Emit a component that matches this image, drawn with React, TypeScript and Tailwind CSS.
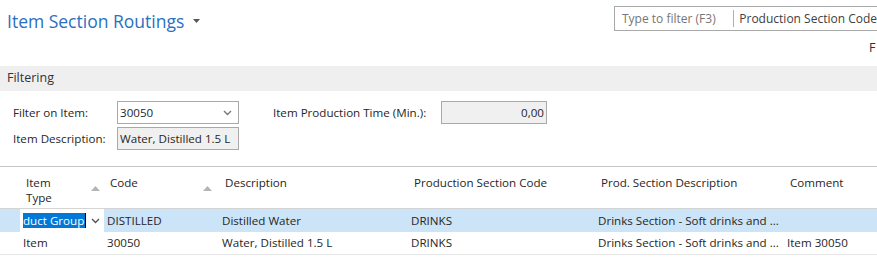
import React from 'react';

const font = { fontFamily: '"Open Sans", "Noto Sans", sans-serif' };

const Chevron = ({ className = '' }: { className?: string }) => (
  <svg width="9" height="6" viewBox="0 0 9 6" className={className}>
    <path d="M1 1 L4.5 4.5 L8 1" fill="none" stroke="currentColor" strokeWidth="1.4" />
  </svg>
);

const SortUp = () => (
  <svg width="9" height="5" viewBox="0 0 9 5">
    <path d="M0 5 L4.5 0 L9 5 Z" fill="#b4b4b4" />
  </svg>
);

const cols = 'grid grid-cols-[20px_84px_115px_189px_187px_189px_1fr]';

const App: React.FC = () => {
  return (
    <div className="w-[877px] h-[261px] bg-white overflow-hidden text-[11.6px] text-[#262626]" style={font}>
      {/* top bar */}
      <div className="flex h-[66px]">
        <div className="flex items-start pl-[7px] pt-[6px]">
          <span className="text-[17.5px] text-[#2a6fc2] leading-[30px]">Item Section Routings</span>
          <svg width="7" height="4" viewBox="0 0 7 4" className="ml-[9px] mt-[13px]">
            <path d="M0 0 L7 0 L3.5 4 Z" fill="#555" />
          </svg>
        </div>
        <div className="ml-auto flex flex-col items-end pt-[6px]">
          <div className="flex w-[263px] h-[25px] border border-[#a9a9a9] border-r-0 items-center text-[12px]">
            <span className="pl-[7px] w-[122px] text-[#767676]">Type to filter (F3)</span>
            <span className="h-[17px] w-px bg-[#b0b0b0]" />
            <span className="pl-[5px] whitespace-nowrap text-[#404040]">Production Section Code</span>
          </div>
          <span className="mt-[9px] w-[8px] text-[12.5px] text-[#333] overflow-hidden leading-[16px]">F</span>
        </div>
      </div>

      {/* Filtering fasttab */}
      <div className="h-[25px] bg-[#efefef] flex items-center pl-[7px] text-[12.5px] text-[#333]">Filtering</div>

      <div className="flex pt-[10px] pl-[13px] gap-[34px]">
        <div className="flex flex-col gap-[3px]">
          <div className="flex items-center h-[23px]">
            <span className="w-[104px]">Filter on Item:</span>
            <div className="w-[122px] h-[23px] border border-[#a9a9a9] flex items-center pl-[2px] pr-[6px]">
              <span className="flex-1">30050</span>
              <Chevron className="text-[#777]" />
            </div>
          </div>
          <div className="flex items-center h-[23px]">
            <span className="w-[104px]">Item Description:</span>
            <div className="w-[122px] h-[23px] border border-[#a9a9a9] bg-[#f0f0f0] flex items-center pl-[2px]">
              Water, Distilled 1.5 L
            </div>
          </div>
        </div>
        <div className="flex items-center h-[23px]">
          <span className="w-[168px]">Item Production Time (Min.):</span>
          <div className="w-[106px] h-[23px] border border-[#a9a9a9] bg-[#f0f0f0] flex items-center justify-end pr-[2px]">
            0,00
          </div>
        </div>
      </div>

      {/* list */}
      <div className="mt-[16px] border-t border-[#c6c6c6]">
        <div className={`${cols} h-[41px] pt-[8px]`}>
          <div />
          <div className="flex pl-[6px] pr-[4px]">
            <div className="flex flex-col leading-[15px]">
              <span>Item</span>
              <span>Type</span>
            </div>
            <span className="ml-auto mt-[11px]"><SortUp /></span>
          </div>
          <div className="flex pl-[6px] pr-[7px]">
            <span className="leading-[15px]">Code</span>
            <span className="ml-auto mt-[11px]"><SortUp /></span>
          </div>
          <div className="pl-[6px] leading-[15px]">Description</div>
          <div className="pl-[6px] leading-[15px]">Production Section Code</div>
          <div className="pl-[6px] leading-[15px]">Prod. Section Description</div>
          <div className="pl-[6px] leading-[15px]">Comment</div>
        </div>
        <div className={`${cols} h-[24px] bg-[#cce4f7] border-t border-[#d4d4d4] items-center`}>
          <div className="h-full" />
          <div className="h-full bg-white flex items-center pl-[3px] pr-[4px]">
            <span className="bg-[#0078d7] text-white leading-[15px] pr-[1px] border-r border-[#000]">duct Group</span>
            <Chevron className="ml-auto text-[#555]" />
          </div>
          <div className="pl-[3px]">DISTILLED</div>
          <div className="pl-[3px]">Distilled Water</div>
          <div className="pl-[3px]">DRINKS</div>
          <div className="pl-[3px] whitespace-nowrap">Drinks Section - Soft drinks and ...</div>
          <div />
        </div>
        <div className={`${cols} h-[23px] items-center border-b border-[#e6e6e6]`}>
          <div />
          <div className="pl-[3px]">Item</div>
          <div className="pl-[3px]">30050</div>
          <div className="pl-[3px]">Water, Distilled 1.5 L</div>
          <div className="pl-[3px]">DRINKS</div>
          <div className="pl-[3px] whitespace-nowrap">Drinks Section - Soft drinks and ...</div>
          <div className="pl-[3px]">Item 30050</div>
        </div>
      </div>
    </div>
  );
};

export default App;
